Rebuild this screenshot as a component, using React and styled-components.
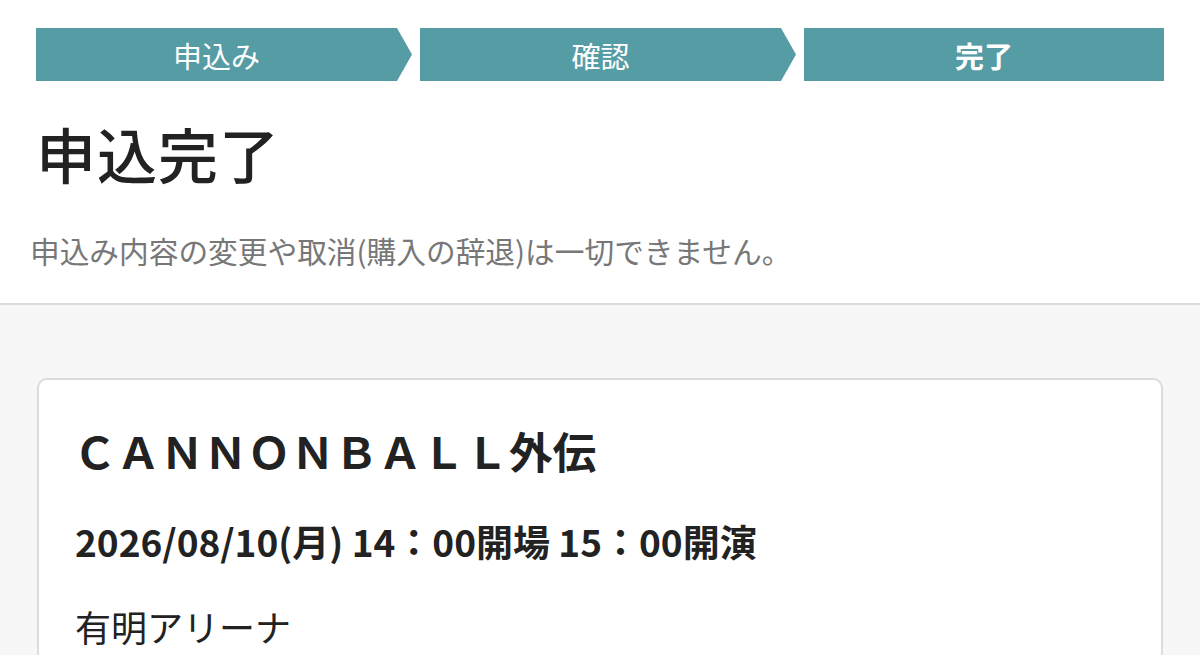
import React from 'react';
import styled, { createGlobalStyle } from 'styled-components';

const GlobalStyle = createGlobalStyle`
  html, body {
    margin: 0;
    padding: 0;
    background: #f7f7f7;
    font-family: "Noto Sans CJK JP", "Noto Sans", sans-serif;
    color: #222;
  }
`;

const Header = styled.header`
  background: #ffffff;
  border-bottom: 2px solid #dcdcdc;
  padding: 28px 36px 0;
  height: 305px;
  box-sizing: border-box;
`;

const Steps = styled.ol`
  display: grid;
  grid-template-columns: 376fr 376fr 360fr;
  gap: 8px;
  margin: 0;
  padding: 0;
  list-style: none;
`;

const Step = styled.li`
  height: 53px;
  display: flex;
  align-items: center;
  justify-content: center;
  background: #559ca5;
  color: #ffffff;
  font-size: 29px;
  font-weight: ${(p) => (p.$current ? 700 : 400)};
  padding-right: ${(p) => (p.$arrow ? '15px' : '0')};
  clip-path: ${(p) =>
    p.$arrow
      ? 'polygon(0 0, calc(100% - 15px) 0, 100% 50%, calc(100% - 15px) 100%, 0 100%)'
      : 'none'};
`;

const Title = styled.h1`
  margin: 36px 0 0 0;
  font-size: 60px;
  font-weight: 500;
  line-height: 1.2;
  letter-spacing: 1px;
`;

const Note = styled.p`
  margin: 41px 0 0 -6px;
  font-size: 29.7px;
  color: #777;
  line-height: 1.4;
`;

const Main = styled.main`
  padding: 73px 37px 0;
`;

const Card = styled.section`
  background: #ffffff;
  border: 2px solid #dcdcdc;
  border-radius: 10px;
  padding: 42px 36px 60px;
  min-height: 400px;
`;

const EventName = styled.h2`
  margin: 0 0 0 -2px;
  font-size: 43.6px;
  font-weight: 700;
  line-height: 1.3;
`;

const DateLine = styled.p`
  margin: 37px 0 0;
  font-size: 37px;
  font-weight: 700;
  line-height: 1.4;
`;

const Venue = styled.p`
  margin: 34px 0 0;
  font-size: 36px;
  font-weight: 400;
  line-height: 1.4;
`;

export default function App() {
  const steps = [
    { label: '申込み', current: false },
    { label: '確認', current: false },
    { label: '完了', current: true },
  ];

  return (
    <>
      <GlobalStyle />
      <Header>
        <Steps>
          {steps.map((s, i) => (
            <Step key={s.label} $current={s.current} $arrow={i < steps.length - 1}>
              {s.label}
            </Step>
          ))}
        </Steps>
        <Title>申込完了</Title>
        <Note>申込み内容の変更や取消(購入の辞退)は一切できません。</Note>
      </Header>
      <Main>
        <Card>
          <EventName>ＣＡＮＮＯＮＢＡＬＬ外伝</EventName>
          <DateLine>2026/08/10(月) 14：00開場 15：00開演</DateLine>
          <Venue>有明アリーナ</Venue>
        </Card>
      </Main>
    </>
  );
}
